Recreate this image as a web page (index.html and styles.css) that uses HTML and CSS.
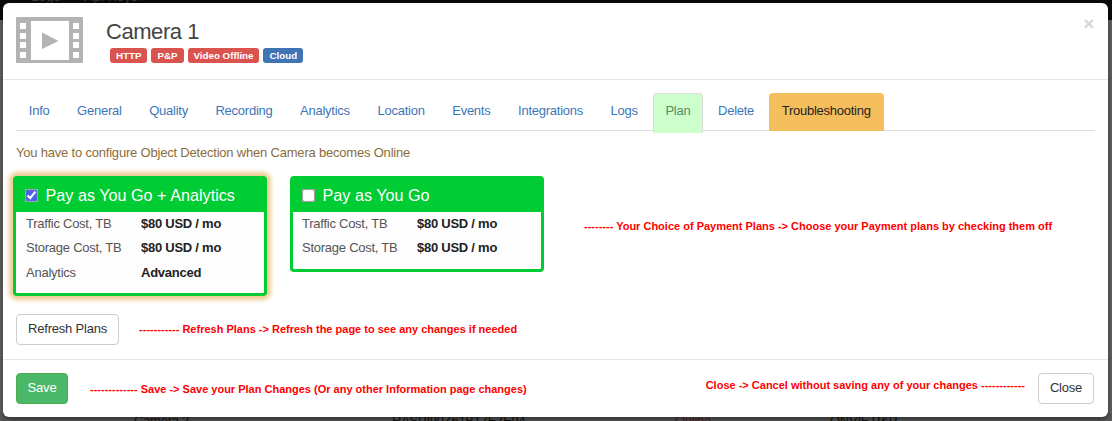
FILE: index.html
```html
<!DOCTYPE html>
<html lang="en">
<head>
<meta charset="utf-8">
<title>Camera 1</title>
<link rel="stylesheet" href="styles.css">
</head>
<body>
<div class="page">
  <div class="topbar"><span>Logs</span><span>Api Keys</span></div>
  <div class="bgrow"><span>Camera 2</span><span>RASPI90Z61B17E7E94</span><span class="bg-online">Online</span><span>ONVIF P&amp;P</span></div>
</div>
<div class="modal">
  <header class="modal-header">
    <svg class="cam-icon" width="67" height="46" viewBox="0 0 67 46" aria-hidden="true">
      <path fill="#b3b3b3" fill-rule="evenodd" d="M1 0H66a1 1 0 0 1 1 1V45a1 1 0 0 1-1 1H1a1 1 0 0 1-1-1V1a1 1 0 0 1 1-1ZM15 4V43H53V4ZM4 6V12H10V6ZM4 16V22H10V16ZM4 25V31H10V25ZM4 35V41H10V35ZM57 6V12H63V6ZM57 16V22H63V16ZM57 25V31H63V25ZM57 35V41H63V35Z"/>
      <path fill="#b3b3b3" d="M26 15.500L42.500 24 26 32Z"/>
    </svg>
    <div class="titles">
      <h4 class="title">Camera 1</h4>
      <div class="badges">
        <span class="badge badge-red">HTTP</span>
        <span class="badge badge-red">P&amp;P</span>
        <span class="badge badge-red">Video Offline</span>
        <span class="badge badge-blue">Cloud</span>
      </div>
    </div>
    <span class="close-x">×</span>
  </header>
  <main class="modal-body">
    <nav class="tabs">
      <a class="tab">Info</a>
      <a class="tab">General</a>
      <a class="tab">Quality</a>
      <a class="tab">Recording</a>
      <a class="tab">Analytics</a>
      <a class="tab">Location</a>
      <a class="tab">Events</a>
      <a class="tab">Integrations</a>
      <a class="tab">Logs</a>
      <a class="tab tab-plan">Plan</a>
      <a class="tab">Delete</a>
      <a class="tab tab-trouble">Troubleshooting</a>
    </nav>
    <p class="warning">You have to configure Object Detection when Camera becomes Online</p>
    <div class="plans">
      <section class="card card-selected">
        <label class="card-head"><input type="checkbox" checked> Pay as You Go + Analytics</label>
        <div class="card-body">
          <div class="row"><span class="row-label">Traffic Cost, TB</span><b>$80 USD / mo</b></div>
          <div class="row"><span class="row-label">Storage Cost, TB</span><b>$80 USD / mo</b></div>
          <div class="row"><span class="row-label">Analytics</span><b>Advanced</b></div>
        </div>
      </section>
      <section class="card card-plain">
        <label class="card-head"><input type="checkbox"> Pay as You Go</label>
        <div class="card-body">
          <div class="row"><span class="row-label">Traffic Cost, TB</span><b>$80 USD / mo</b></div>
          <div class="row"><span class="row-label">Storage Cost, TB</span><b>$80 USD / mo</b></div>
        </div>
      </section>
      <span class="note note-plans">-------- Your Choice of Payment Plans -&gt; Choose your Payment plans by checking them off</span>
    </div>
    <div class="refresh-row">
      <button class="btn">Refresh Plans</button>
      <span class="note">----------- Refresh Plans -&gt; Refresh the page to see any changes if needed</span>
    </div>
  </main>
  <footer class="modal-footer">
    <button class="btn btn-save">Save</button>
    <span class="note note-save">------------- Save -&gt; Save your Plan Changes (Or any other Information page changes)</span>
    <span class="note note-close">Close -&gt; Cancel without saving any of your changes ------------</span>
    <button class="btn btn-close">Close</button>
  </footer>
</div>
</body>
</html>
```
FILE: styles.css
```css
* { box-sizing: border-box; }
html, body { margin: 0; height: 421px; overflow: hidden; }
body {
  font-family: "Liberation Sans", Arial, sans-serif;
  font-size: 13px;
  letter-spacing: -.25px;
  color: #333;
  background: #666;
}
.page {
  height: 421px;
  display: flex;
  flex-direction: column;
  justify-content: space-between;
  overflow: hidden;
}
.topbar {
  height: 20px;
  background: #0b0b0b;
  color: #3a3a3a;
  display: flex;
  gap: 24px;
  padding-left: 31px;
  font-size: 14px;
  line-height: 16px;
}
.topbar span { margin-top: -12px; height: 16px; }
.bgrow {
  display: grid;
  grid-template-columns: 258px 283px 155px auto;
  padding-left: 134px;
  height: 8px;
  line-height: 16px;
  color: #111;
  background: #5c5c5c;
  overflow: hidden;
}
.bg-online { color: #4a2226; }

.modal {
  position: absolute;
  left: 3px;
  top: 3px;
  width: 1105px;
  height: 414px;
  display: flex;
  flex-direction: column;
  background: #fff;
  border-radius: 6px;
  box-shadow: 0 3px 9px rgba(0,0,0,.5);
}
.modal-header {
  display: flex;
  height: 77px;
  padding: 14px 14px 0 13px;
  border-bottom: 1px solid #e5e5e5;
}
.cam-icon { display: block; flex: none; }
.titles { margin-left: 23px; }
.title {
  margin: 3px 0 0;
  font-size: 22px;
  font-weight: 400;
  letter-spacing: -.45px;
  line-height: 24px;
  color: #444;
}
.badges { display: flex; gap: 4px; margin: 4px 0 0 4px; }
.badge {
  height: 15px;
  padding: 0 6px;
  border-radius: 3px;
  color: #fff;
  font-size: 9.75px;
  font-weight: 700;
  letter-spacing: 0;
  line-height: 15px;
}
.badge-red { background: #d9534f; }
.badge-blue { background: #3f74b5; }
.close-x {
  margin: -5px 0 0 auto;
  height: 24px;
  font-size: 19px;
  font-weight: 700;
  line-height: 24px;
  color: #d6d6d6;
}

.modal-body { flex: 1; padding: 13px 13px 0; }
.tabs {
  display: flex;
  gap: 2px;
  height: 38px;
  border-bottom: 1px solid #ddd;
}
.tab {
  height: 37px;
  padding: 9px 11.800px;
  border: 1px solid transparent;
  border-radius: 4px 4px 0 0;
  color: #3d76b8;
  line-height: 15px;
}
.tab-plan {
  height: 40px;
  border-color: #ddd #ddd transparent;
  background: #ccffcc;
  color: #5b8a60;
}
.tab-trouble {
  height: 38px;
  padding-right: 12.500px;
  border-color: transparent;
  background: #f5be5c;
  color: #222;
}
.warning {
  margin: 14px 0 0;
  font-size: 13px;
  letter-spacing: -.2px;
  line-height: 15px;
  color: #8a6d3b;
}
.plans {
  display: flex;
  align-items: flex-start;
  gap: 23px;
  margin: 16px 0 0 -3px;
}
.card {
  width: 254px;
  border: 3px solid #00cc33;
  border-radius: 4px;
  background: #fdfdfd;
}
.card-selected { box-shadow: 0 0 4px 4px #eecd94; }
.card-head {
  display: flex;
  align-items: center;
  height: 33px;
  padding: 0 0 0 9px;
  background: #00cc33;
  color: #fff;
  font-size: 16.200px;
  letter-spacing: 0;
  white-space: pre;
}
.card-head input {
  width: 13px;
  height: 13px;
  margin: 0 3px 0 0;
  accent-color: #4a62e8;
  box-shadow: inset 0 0 1px 1px #aaa;
}
.card-body { padding-bottom: 8.100px; }
.row {
  display: flex;
  height: 24.300px;
  align-items: center;
  padding: 0 0 1px 10px;
  color: #222;
}
.card-plain .row { padding-left: 9px; }
.row-label { width: 115px; color: #555; }
.note {
  color: #ff0000;
  font-size: 11px;
  font-weight: 700;
  letter-spacing: 0;
  white-space: nowrap;
}
.note-plans { margin: 44px 0 0 17px; }
.refresh-row {
  display: flex;
  align-items: center;
  gap: 20px;
  margin-top: 18px;
}
.btn {
  height: 31px;
  padding: 0 11px 2px;
  border: 1px solid #ccc;
  border-radius: 4px;
  background: #fff;
  color: #333;
  font: 13px "Liberation Sans", Arial, sans-serif;
  letter-spacing: -.2px;
}
.modal-footer {
  display: flex;
  align-items: center;
  height: 58px;
  padding: 0 14px 0 13px;
  border-top: 1px solid #e5e5e5;
}
.btn-save {
  width: 52px;
  padding: 0 0 2px;
  border-color: #4cae4c;
  background: #4ab868;
  color: #fff;
}
.note-save { margin-left: 22px; }
.note-close { margin: -8px 13px 0 auto; }
.btn-close { width: 56px; padding: 0 0 2px; }
```
